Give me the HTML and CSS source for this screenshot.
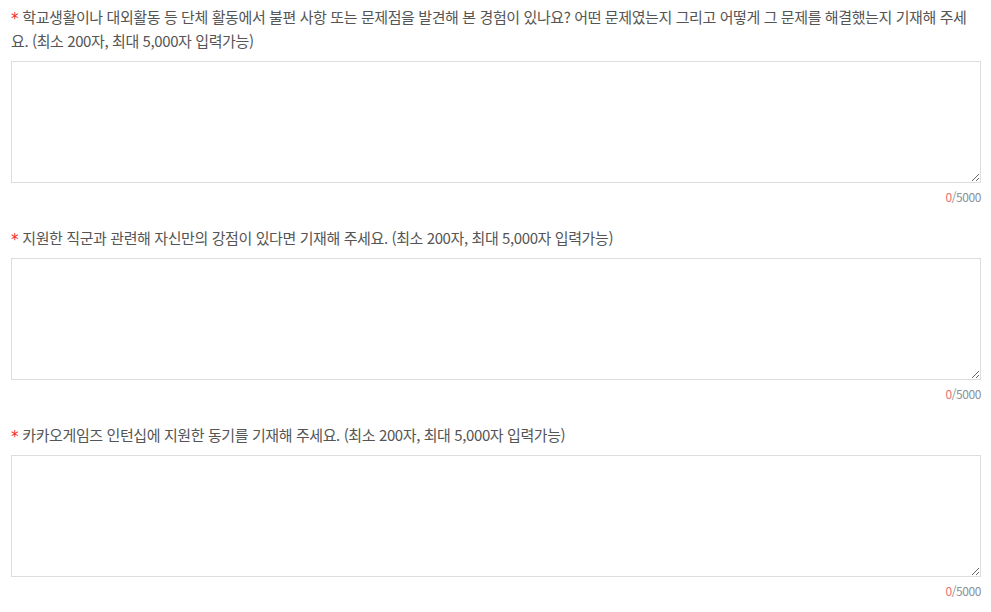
FILE: index.html
```html
<!DOCTYPE html>
<html lang="ko">
<head>
    <meta charset="UTF-8">
    <meta name="viewport" content="width=device-width, initial-scale=1.0">
    <title>자기소개서</title>
    <link rel="stylesheet" href="styles.css">
</head>
<body>
    <div class="container">
        <div class="question">
            <label class="label" for="q1"><span class="req">*</span> 학교생활이나 대외활동 등 단체 활동에서 불편 사항 또는 문제점을 발견해 본 경험이 있나요? 어떤 문제였는지 그리고 어떻게 그 문제를 해결했는지 기재해 주세요. (최소 200자, 최대 5,000자 입력가능)</label>
            <textarea id="q1" class="answer" maxlength="5000"></textarea>
            <div class="count"><span class="now">0</span>/5000</div>
        </div>
        <div class="question">
            <label class="label" for="q2"><span class="req">*</span> 지원한 직군과 관련해 자신만의 강점이 있다면 기재해 주세요. (최소 200자, 최대 5,000자 입력가능)</label>
            <textarea id="q2" class="answer" maxlength="5000"></textarea>
            <div class="count"><span class="now">0</span>/5000</div>
        </div>
        <div class="question">
            <label class="label" for="q3"><span class="req">*</span> 카카오게임즈 인턴십에 지원한 동기를 기재해 주세요. (최소 200자, 최대 5,000자 입력가능)</label>
            <textarea id="q3" class="answer" maxlength="5000"></textarea>
            <div class="count"><span class="now">0</span>/5000</div>
        </div>
    </div>
</body>
</html>
```

FILE: styles.css
```css
body {
    font-family: "Noto Sans CJK KR", "Noto Sans", sans-serif;
    margin: 0;
    padding: 5px 10px 0 11px;
    background: #fff;
    color: #555;
}
.question {
    margin-bottom: 20px;
}
.label {
    display: block;
    font-size: 15px;
    line-height: 24px;
    letter-spacing: -0.4px;
    margin-bottom: 8px;
}
.req {
    display: inline-block;
    vertical-align: top;
    height: 24px;
    line-height: 28px;
    font-family: "DejaVu Sans", sans-serif;
    font-size: 15px;
    color: #f02828;
    letter-spacing: 0;
}
.answer {
    display: block;
    box-sizing: border-box;
    width: 100%;
    height: 122px;
    border: 1px solid #ddd;
    padding: 10px;
    font-family: inherit;
    font-size: 14px;
    resize: vertical;
}
.count {
    text-align: right;
    font-size: 12px;
    line-height: 18px;
    margin-top: 5px;
    color: #8a8f9a;
    letter-spacing: -0.4px;
}
.now {
    color: #f07070;
}
```
